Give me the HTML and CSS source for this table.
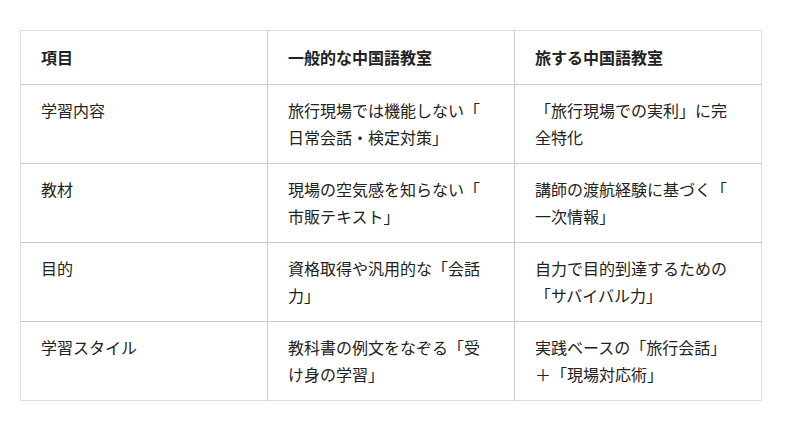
FILE: index.html
```html
<!DOCTYPE html>
<html lang="ja">
<head>
<meta charset="utf-8">
<title>比較表</title>
<link rel="stylesheet" href="styles.css">
</head>
<body>
<div class="page">
  <table class="compare">
    <thead>
      <tr>
        <th>項目</th>
        <th>一般的な中国語教室</th>
        <th>旅する中国語教室</th>
      </tr>
    </thead>
    <tbody>
      <tr>
        <td>学習内容</td>
        <td>旅行現場では機能しない「日常会話・検定対策」</td>
        <td>「旅行現場での実利」に完全特化</td>
      </tr>
      <tr>
        <td>教材</td>
        <td>現場の空気感を知らない「市販テキスト」</td>
        <td>講師の渡航経験に基づく「一次情報」</td>
      </tr>
      <tr>
        <td>目的</td>
        <td>資格取得や汎用的な「会話力」</td>
        <td>自力で目的到達するための「サバイバル力」</td>
      </tr>
      <tr>
        <td>学習スタイル</td>
        <td>教科書の例文をなぞる「受け身の学習」</td>
        <td>実践ベースの「旅行会話」＋「現場対応術」</td>
      </tr>
    </tbody>
  </table>
</div>
</body>
</html>
```

FILE: styles.css
```css
html, body {
  margin: 0;
  padding: 0;
  background: #ffffff;
}

.page {
  padding: 30px 20px;
  font-family: "Noto Sans CJK JP", "Noto Sans", sans-serif;
  color: #222222;
}

.compare {
  width: 742px;
  table-layout: fixed;
  border-collapse: collapse;
  border: 1px solid #dedede;
  font-size: 16px;
  line-height: 27px;
}

.compare th,
.compare td {
  text-align: left;
  vertical-align: top;
  padding: 12px 20px;
  line-break: anywhere;
  border-top: 1px solid #cbcbcb;
  border-left: 1px solid #cbcbcb;
}

.compare tr > :first-child {
  border-left: 1px solid #dedede;
}

.compare thead th {
  border-top: 1px solid #dedede;
  font-weight: 700;
  padding: 13px 20px;
}
```
